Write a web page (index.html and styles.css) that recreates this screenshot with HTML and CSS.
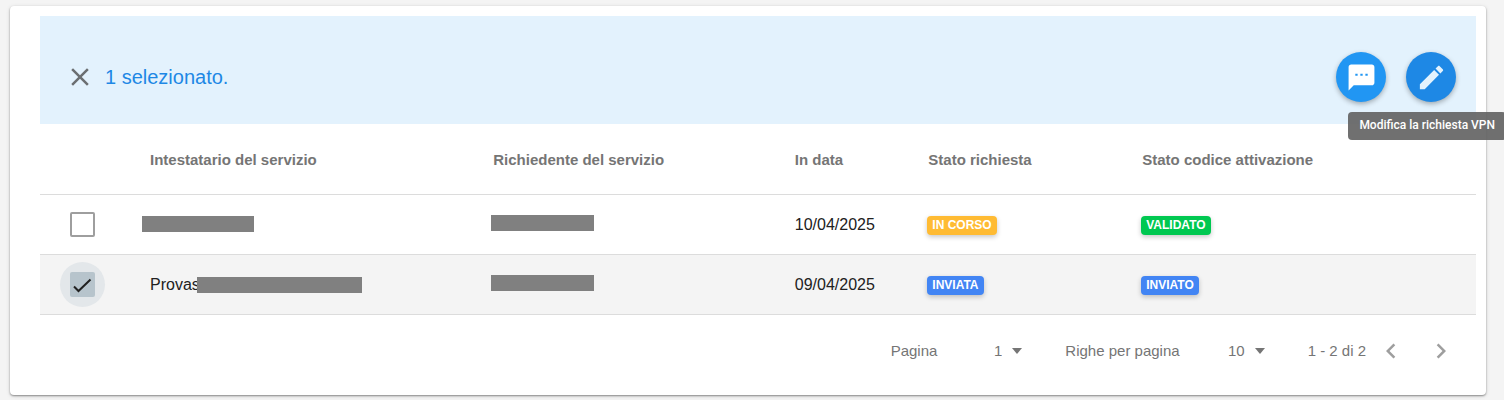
FILE: index.html
```html
<!DOCTYPE html>
<html lang="it">
<head>
<meta charset="utf-8">
<title>Richieste VPN</title>
<link rel="stylesheet" href="styles.css">
</head>
<body>
<main class="card">
  <header class="toolbar">
    <button class="close" type="button" aria-label="Annulla selezione">
      <svg viewBox="0 0 24 24" width="30" height="30"><path d="M19 6.41L17.59 5 12 10.59 6.41 5 5 6.41 10.59 12 5 17.59 6.41 19 12 13.41 17.59 19 19 17.59 13.41 12z"/></svg>
    </button>
    <h1 class="title">1 selezionato.</h1>
    <div class="actions">
      <button class="fab" type="button" aria-label="Messaggi">
        <svg viewBox="0 0 24 24" width="31" height="31"><path d="M20 2H4c-1.1 0-1.99.9-1.99 2L2 22l4-4h14c1.1 0 2-.9 2-2V4c0-1.100-.9-2-2-2zM9 10.700H7.200V9H9v1.700zm3.900 0h-1.800V9h1.800v1.700zm3.900 0H15V9h1.800v1.700z"/></svg>
      </button>
      <div class="anchor">
        <button class="fab fab-active" type="button" aria-describedby="tip" aria-label="Modifica">
          <svg viewBox="0 0 24 24" width="31" height="31"><path d="M3 17.25V21h3.750L17.810 9.940l-3.750-3.750L3 17.250zM20.710 7.040c.39-.39.39-1.020 0-1.410l-2.340-2.340c-.39-.39-1.020-.39-1.410 0l-1.830 1.830 3.750 3.750 1.830-1.830z"/></svg>
        </button>
        <span class="tooltip" id="tip" role="tooltip">Modifica la richiesta VPN</span>
      </div>
    </div>
  </header>

  <table class="grid">
    <colgroup><col class="c-check"><col class="c-owner"><col class="c-applicant"><col class="c-date"><col class="c-state"><col class="c-code"></colgroup>
    <thead>
      <tr>
        <td></td>
        <th scope="col">Intestatario del servizio</th>
        <th scope="col">Richiedente del servizio</th>
        <th scope="col">In data</th>
        <th scope="col">Stato richiesta</th>
        <th scope="col">Stato codice attivazione</th>
      </tr>
    </thead>
    <tbody>
      <tr>
        <td class="select-cell"><label class="check"><input type="checkbox" aria-label="Seleziona richiesta del 10/04/2025"><svg viewBox="0 0 25 25" width="25" height="25"><path d="M4 14.500L8.500 19L20.500 7.500"/></svg></label></td>
        <td><span class="mask mask-owner"></span></td>
        <td><span class="mask mask-applicant"></span></td>
        <td>10/04/2025</td>
        <td><span class="badge amber">IN CORSO</span></td>
        <td><span class="badge green">VALIDATO</span></td>
      </tr>
      <tr class="selected">
        <td class="select-cell"><label class="check"><input type="checkbox" checked aria-label="Seleziona richiesta del 09/04/2025"><svg viewBox="0 0 25 25" width="25" height="25"><path d="M4 14.500L8.500 19L20.500 7.500"/></svg></label></td>
        <td>Provas<span class="mask mask-name"></span></td>
        <td><span class="mask mask-applicant"></span></td>
        <td>09/04/2025</td>
        <td><span class="badge blue">INVIATA</span></td>
        <td><span class="badge blue">INVIATO</span></td>
      </tr>
    </tbody>
  </table>

  <footer class="pager">
    <label for="page">Pagina</label>
    <div class="drop"><select id="page"><option>1</option></select></div>
    <label for="rows">Righe per pagina</label>
    <div class="drop"><select id="rows"><option>10</option></select></div>
    <span>1 - 2 di 2</span>
    <button class="step" type="button" aria-label="Pagina precedente"><svg viewBox="0 0 24 24" width="30" height="30"><path d="M15.410 7.410L14 6l-6 6 6 6 1.410-1.410L10.830 12z"/></svg></button>
    <button class="step" type="button" aria-label="Pagina successiva"><svg viewBox="0 0 24 24" width="30" height="30"><path d="M10 6L8.590 7.410 13.170 12l-4.580 4.590L10 18l6-6z"/></svg></button>
  </footer>
</main>
</body>
</html>
```
FILE: styles.css
```css
* { box-sizing: border-box; }

body {
  margin: 0;
  padding: 6px 18px 5px 10px;
  overflow: hidden;
  background: #f4f4f4;
  color: #212121;
  font: 16px/20px "Liberation Sans", Arial, sans-serif;
}

button {
  padding: 0;
  border: 0;
  background: none;
  display: grid;
  place-items: center;
  cursor: pointer;
}

svg { display: block; fill: currentColor; }

.card {
  padding: 10px 10px 8px 30px;
  border-radius: 4px;
  background: #fff;
  box-shadow: 0 1px 2px rgba(0, 0, 0, .4), 0 1px 5px rgba(0, 0, 0, .1);
}

.toolbar {
  display: flex;
  align-items: center;
  height: 108px;
  padding: 14px 20px 0 25px;
  background: #e3f2fd;
}

.close { color: #6b6f72; }

.title {
  margin: 0 0 0 10px;
  font-size: 20px;
  line-height: 24px;
  font-weight: 400;
  color: #1e88e5;
}

.actions { display: flex; gap: 20px; margin-left: auto; }

.anchor { position: relative; }

.fab {
  width: 50px;
  height: 50px;
  border-radius: 50%;
  background: #2196f3;
  color: #fff;
  box-shadow: 0 2px 5px rgba(0, 0, 0, .3);
}

.fab-active { background: #1e88e5; color: #e3f2fd; }

.tooltip {
  position: absolute;
  z-index: 1;
  top: 60px;
  right: -50px;
  padding: 3px 11px 5px;
  border-radius: 4px;
  background: rgba(97, 97, 97, .9);
  color: #fff;
  font-family: Roboto, "Liberation Sans", sans-serif;
  font-size: 12px;
  font-weight: 500;
  white-space: nowrap;
}

.grid {
  width: 100%;
  border-collapse: separate;
  border-spacing: 0;
  table-layout: fixed;
}

.c-check { width: 100px; }
.c-owner { width: 23.9%; }
.c-applicant { width: 21%; }
.c-date { width: 9.3%; }
.c-state { width: 14.9%; }

.grid th,
.grid td {
  position: relative;
  height: 60px;
  padding: 0 10px;
  border-bottom: 1px solid #dcdcdc;
  text-align: left;
  vertical-align: middle;
}

.grid thead th,
.grid thead td { height: 71px; }

.grid th { padding-top: 2px; font-size: 15px; color: #757575; }

.selected { background: #f4f4f4; }

.grid .select-cell { padding-left: 20px; }

.check {
  display: grid;
  place-items: center;
  width: 45px;
  height: 45px;
  border-radius: 50%;
}

.check > * { grid-area: 1 / 1; }

.check input {
  appearance: none;
  width: 25px;
  height: 25px;
  margin: 0;
  border: 2px solid #9e9e9e;
  border-radius: 2px;
}

.check input:checked { border: 0; background: #b7c4cc; }

.check svg {
  fill: none;
  stroke: #212121;
  stroke-width: 2;
  visibility: hidden;
  pointer-events: none;
}

.check:has(:checked) { background: #e3e7ea; }
.check input:checked + svg { visibility: visible; }

.mask {
  position: absolute;
  top: 21px;
  height: 16px;
  background: #808080;
}

.mask-owner { left: 2px; width: 112px; }
.mask-applicant { left: 8px; width: 103px; top: 20px; }
.mask-name { left: 57px; width: 165px; top: 22px; }

.badge {
  display: inline-block;
  padding: 0 5px;
  margin-left: -1px;
  border-radius: 4px;
  color: #fff;
  font-size: 12px;
  line-height: 19px;
  font-weight: 700;
  vertical-align: middle;
  box-shadow: 0 2px 5px rgba(0, 0, 0, .22);
}

.amber { background: #ffbb33; }
.green { background: #00c851; }
.blue { background: #4285f4; }

.pager {
  display: flex;
  align-items: center;
  justify-content: flex-end;
  height: 72px;
  padding-right: 10px;
  font-size: 15px;
  color: #757575;
}

.drop { position: relative; margin: 0 38px 0 18px; }

.drop::after {
  content: "";
  position: absolute;
  right: 5px;
  top: 50%;
  margin-top: -3px;
  border: 5px solid transparent;
  border-top: 6px solid #757575;
  border-bottom: 0;
  pointer-events: none;
}

.drop select {
  appearance: none;
  display: block;
  width: 72px;
  height: 30px;
  padding: 0 25px 0 0;
  border: 0;
  background: none;
  color: inherit;
  font: inherit;
  text-align-last: right;
}

.step { width: 50px; height: 50px; color: #9e9e9e; }
```
